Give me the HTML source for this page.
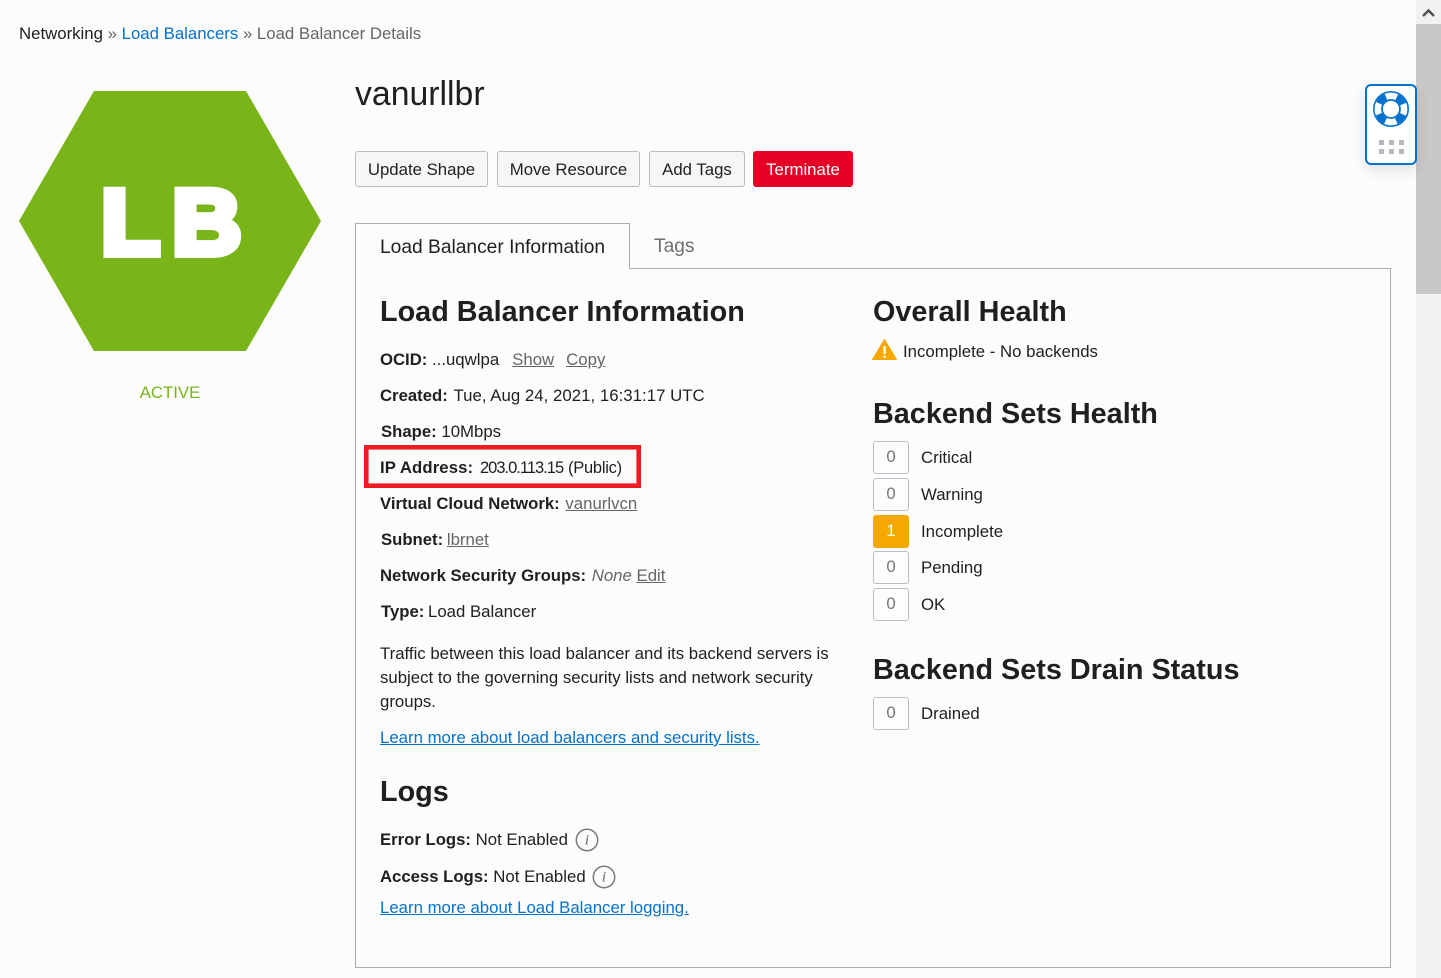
<!DOCTYPE html>
<html lang="en"><head><meta charset="utf-8"><title>Load Balancer Details</title>
<style>
html,body{margin:0;padding:0;width:1441px;height:978px;overflow:hidden;background:#fcfcfc}
body{position:relative;font-family:"Liberation Sans",Arial,sans-serif;font-size:16.8px;color:#1f1f1f}
.t{position:absolute;white-space:nowrap;line-height:24px}
b{font-weight:700;color:#1f1f1f;font-size:16.72px}
a{color:#0572ce;text-decoration:none}
.g{color:#666;text-decoration:underline}
.u{color:#0572ce;text-decoration:underline}
h2{position:absolute;margin:0;font-size:28.8px;line-height:36px;font-weight:700;white-space:nowrap;color:#1f1f1f}
.btn{position:absolute;top:151px;height:34px;line-height:35px;border:1px solid #b9bbc0;border-radius:3px;background:#f6f6f6;text-align:center;color:#1f1f1f;white-space:nowrap}
.n{position:absolute;left:873px;width:34px;height:31px;line-height:30px;border:1px solid #b9bec8;border-radius:3px;text-align:center;color:#777;background:#fdfdfd}
</style></head><body>
<div class="t" style="left:19px;top:22px"><span style="color:#1f1f1f">Networking</span> <span style="color:#666">»</span> <a>Load Balancers</a> <span style="color:#666">» Load Balancer Details</span></div>

<svg style="position:absolute;left:0;top:0" width="340" height="360">
<polygon points="94,91 246,91 321,221 246,351 94,351 19,221" fill="#79b419"/>
<g font-family="Liberation Sans,Arial,sans-serif" font-weight="700" font-size="92" fill="#fff" stroke="#fff" stroke-width="8" stroke-linejoin="miter">
<text transform="translate(101.2,254) scale(1.04,1)">L</text>
<text transform="translate(172.2,254) scale(1.04,1)">B</text>
</g></svg>
<div class="t" style="left:19px;width:302px;top:381px;text-align:center;color:#79b419">ACTIVE</div>

<div class="t" style="left:355px;top:73px;font-size:33.8px;line-height:42px;color:#1f1f1f">vanurllbr</div>

<div class="btn" style="left:355px;width:131px">Update Shape</div>
<div class="btn" style="left:497px;width:141px">Move Resource</div>
<div class="btn" style="left:649px;width:94px">Add Tags</div>
<div class="btn" style="left:753px;width:98px;background:#e60026;border-color:#e60026;color:#fff">Terminate</div>

<div style="position:absolute;left:355px;top:268px;width:1034px;height:698px;border:1px solid #adadad"></div>
<div style="position:absolute;left:355px;top:223px;width:273px;height:45px;border:1px solid #adadad;border-bottom:0;background:#fcfcfc"></div>
<div style="position:absolute;left:356px;top:266px;width:273px;height:4px;background:#fcfcfc"></div>
<div class="t" style="left:380px;top:236px;font-size:19.2px;color:#1f1f1f">Load Balancer Information</div>
<div class="t" style="left:654px;top:235px;font-size:19.2px;color:#6f6f6f">Tags</div>

<h2 style="left:380px;top:294px">Load Balancer Information</h2>
<div class="t" style="left:380px;top:348px"><b>OCID:</b> ...uqwlpa<span class="g" style="margin-left:13px">Show</span><span class="g" style="margin-left:12px">Copy</span></div>
<div class="t" style="left:380px;top:384px"><b>Created:</b> <span style="margin-left:1px;letter-spacing:.03px">Tue, Aug 24, 2021, 16:31:17 UTC</span></div>
<div class="t" style="left:381px;top:420px"><b>Shape:</b> 10Mbps</div>
<svg style="position:absolute;left:360px;top:440px" width="290" height="54"><rect x="6.3" y="7.3" width="272.4" height="38.4" fill="none" stroke="#ed1c24" stroke-width="4.6"/></svg>
<div class="t" style="left:380px;top:456px"><b style="letter-spacing:.12px">IP Address:</b><span style="position:absolute;left:100px;font-size:16.5px;letter-spacing:-1px">203.0.113.15</span><span style="position:absolute;left:188px;font-size:16.5px;letter-spacing:-.25px">(Public)</span></div>
<div class="t" style="left:380px;top:492px"><b>Virtual Cloud Network:</b> <span class="g" style="margin-left:1px">vanurlvcn</span></div>
<div class="t" style="left:381px;top:528px"><b>Subnet:</b> <span class="g" style="margin-left:-1px">lbrnet</span></div>
<div class="t" style="left:380px;top:564px"><b>Network Security Groups:</b> <i style="color:#666;margin-left:1px">None</i> <span class="g">Edit</span></div>
<div class="t" style="left:381px;top:600px"><b>Type:</b> <span style="margin-left:-1px">Load Balancer</span></div>
<div class="t" style="left:380px;top:642px">Traffic between this load balancer and its backend servers is<br>subject to the governing security lists and network security<br>groups.</div>
<div class="t" style="left:380px;top:726px"><span class="u">Learn more about load balancers and security lists.</span></div>

<h2 style="left:380px;top:774px">Logs</h2>
<div class="t" style="left:380px;top:828px"><b>Error Logs:</b> Not Enabled</div>
<svg style="position:absolute;left:575px;top:828px" width="24" height="24"><circle cx="12" cy="12" r="10.7" fill="none" stroke="#7a7a7a" stroke-width="1.5"/><text x="12" y="16.5" text-anchor="middle" font-family="Liberation Serif,serif" font-style="italic" font-size="15" fill="#666">i</text></svg>
<div class="t" style="left:380px;top:865px"><b>Access Logs:</b> Not Enabled</div>
<svg style="position:absolute;left:592px;top:865px" width="24" height="24"><circle cx="12" cy="12" r="10.7" fill="none" stroke="#7a7a7a" stroke-width="1.5"/><text x="12" y="16.5" text-anchor="middle" font-family="Liberation Serif,serif" font-style="italic" font-size="15" fill="#666">i</text></svg>
<div class="t" style="left:380px;top:896px"><span class="u">Learn more about Load Balancer logging.</span></div>

<h2 style="left:873px;top:294px">Overall Health</h2>
<svg style="position:absolute;left:872px;top:338px" width="26" height="23"><polygon points="12.5,1.5 24.5,21.5 0.5,21.5" fill="#f5a800" stroke="#f5a800" stroke-linejoin="round"/><rect x="11.5" y="8" width="2.2" height="8" fill="#fff"/><rect x="11.5" y="17.5" width="2.2" height="2.4" fill="#fff"/></svg>
<div class="t" style="left:903px;top:340px">Incomplete - No backends</div>

<h2 style="left:873px;top:396px">Backend Sets Health</h2>
<div class="n" style="top:441px">0</div><div class="t" style="left:921px;top:446px">Critical</div>
<div class="n" style="top:478px">0</div><div class="t" style="left:921px;top:483px">Warning</div>
<div class="n" style="top:515px;background:#f5a800;border-color:#f5a800;color:#fff">1</div><div class="t" style="left:921px;top:520px">Incomplete</div>
<div class="n" style="top:551px">0</div><div class="t" style="left:921px;top:556px">Pending</div>
<div class="n" style="top:588px">0</div><div class="t" style="left:921px;top:593px">OK</div>

<h2 style="left:873px;top:652px">Backend Sets Drain Status</h2>
<div class="n" style="top:697px">0</div><div class="t" style="left:921px;top:702px">Drained</div>

<div style="position:absolute;left:1416px;top:0;width:25px;height:978px;background:#f1f1f1"></div>
<div style="position:absolute;left:1416px;top:24px;width:25px;height:270px;background:#c8c8c8"></div>
<svg style="position:absolute;left:1416px;top:0" width="25" height="24"><path d="M7 16 L12.5 10.5 L18 16" fill="none" stroke="#505050" stroke-width="2.4"/></svg>

<div style="position:absolute;left:1365px;top:84px;width:48px;height:77px;border:2px solid #0572ce;border-radius:6px;background:#fff;box-shadow:0 6px 14px rgba(0,0,0,.1)"></div>
<svg style="position:absolute;left:1365px;top:84px" width="52" height="80">
<circle cx="26" cy="25" r="17.2" fill="none" stroke="#0572ce" stroke-width="1.6"/>
<circle cx="26" cy="25" r="9" fill="none" stroke="#0572ce" stroke-width="1.8"/>
<circle cx="26" cy="25" r="13" fill="none" stroke="#0572ce" stroke-width="7" stroke-dasharray="9.42 11" stroke-dashoffset="-5.5"/>
<g fill="#b4b9c0"><rect x="14" y="56" width="5" height="5"/><rect x="24" y="56" width="5" height="5"/><rect x="34" y="56" width="5" height="5"/><rect x="14" y="65" width="5" height="5"/><rect x="24" y="65" width="5" height="5"/><rect x="34" y="65" width="5" height="5"/></g>
</svg>
</body></html>
